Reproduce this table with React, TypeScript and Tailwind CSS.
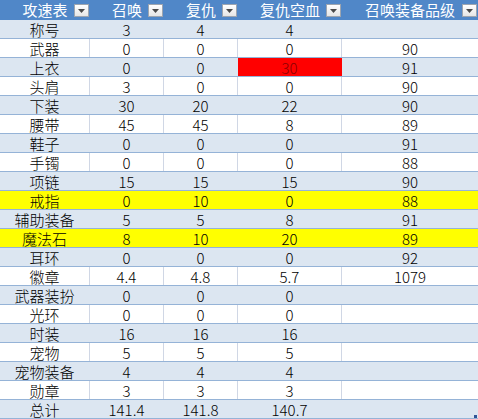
import React from "react";

type RowKind = "blue" | "white" | "yellow";

const rows: { name: string; v: string[]; kind: RowKind }[] = [
  { name: "称号", v: ["3", "4", "4", ""], kind: "blue" },
  { name: "武器", v: ["0", "0", "0", "90"], kind: "white" },
  { name: "上衣", v: ["0", "0", "30", "91"], kind: "blue" },
  { name: "头肩", v: ["3", "0", "0", "90"], kind: "white" },
  { name: "下装", v: ["30", "20", "22", "90"], kind: "blue" },
  { name: "腰带", v: ["45", "45", "8", "89"], kind: "white" },
  { name: "鞋子", v: ["0", "0", "0", "91"], kind: "blue" },
  { name: "手镯", v: ["0", "0", "0", "88"], kind: "white" },
  { name: "项链", v: ["15", "15", "15", "90"], kind: "blue" },
  { name: "戒指", v: ["0", "10", "0", "88"], kind: "yellow" },
  { name: "辅助装备", v: ["5", "5", "8", "91"], kind: "blue" },
  { name: "魔法石", v: ["8", "10", "20", "89"], kind: "yellow" },
  { name: "耳环", v: ["0", "0", "0", "92"], kind: "blue" },
  { name: "徽章", v: ["4.4", "4.8", "5.7", "1079"], kind: "white" },
  { name: "武器装扮", v: ["0", "0", "0", ""], kind: "blue" },
  { name: "光环", v: ["0", "0", "0", ""], kind: "white" },
  { name: "时装", v: ["16", "16", "16", ""], kind: "blue" },
  { name: "宠物", v: ["5", "5", "5", ""], kind: "white" },
  { name: "宠物装备", v: ["4", "4", "4", ""], kind: "blue" },
  { name: "勋章", v: ["3", "3", "3", ""], kind: "white" },
  { name: "总计", v: ["141.4", "141.8", "140.7", ""], kind: "blue" },
];

const headers = ["攻速表", "召唤", "复仇", "复仇空血", "召唤装备品级"];

const cols = "grid grid-cols-[90px_74px_74px_104px_136px]";

function Drop() {
  return (
    <div className="absolute right-[1px] top-[4px] w-[15px] h-[13px] border border-[#9da5b0] bg-gradient-to-b from-[#ffffff] to-[#e6e6e6] flex items-center justify-center">
      <svg width="7" height="4" viewBox="0 0 7 4">
        <polygon points="0,0 7,0 3.5,4" fill="#4a4a4a" />
      </svg>
    </div>
  );
}

export default function App() {
  return (
    <div
      className="relative w-[478px] h-[419px] bg-white overflow-hidden text-[15px] font-light text-black"
      style={{ fontFamily: '"Noto Sans CJK SC", "Liberation Sans", sans-serif' }}
    >
      <div className={`${cols} h-[20px] bg-[#5087c8] text-white font-normal`}>
        {headers.map((h) => (
          <div key={h} className="relative flex items-center justify-center leading-[20px]">
            <span>{h}</span>
            <Drop />
          </div>
        ))}
      </div>
      {rows.map((r) => {
        const bg =
          r.kind === "blue" ? "bg-[#dce6f1]" : r.kind === "yellow" ? "bg-[#ffff00]" : "bg-white";
        const vline =
          r.kind === "white" ? "border-[#d0d7e5]" : r.kind === "blue" ? "border-[#dce6f1]" : "border-[#ffff00]";
        return (
          <div key={r.name} className={`${cols} h-[19px] border-b border-[#95b3d7] ${bg}`}>
            {[r.name, ...r.v].map((c, i) => {
              const red = r.name === "上衣" && i === 3;
              return (
                <div
                  key={i}
                  className={`flex items-end justify-center leading-[18px] h-[18px] ${
                    i < 4 ? "border-r " + (red ? "border-[#ff0000]" : vline) : ""
                  } ${red ? "bg-[#ff0000] text-[#8a0000]" : ""}`}
                >
                  <span className="translate-y-[1px]">{c}</span>
                </div>
              );
            })}
          </div>
        );
      })}
      <div className="absolute right-[1px] bottom-[1px] w-[3px] h-[3px] bg-[#2f5597]" />
    </div>
  );
}
